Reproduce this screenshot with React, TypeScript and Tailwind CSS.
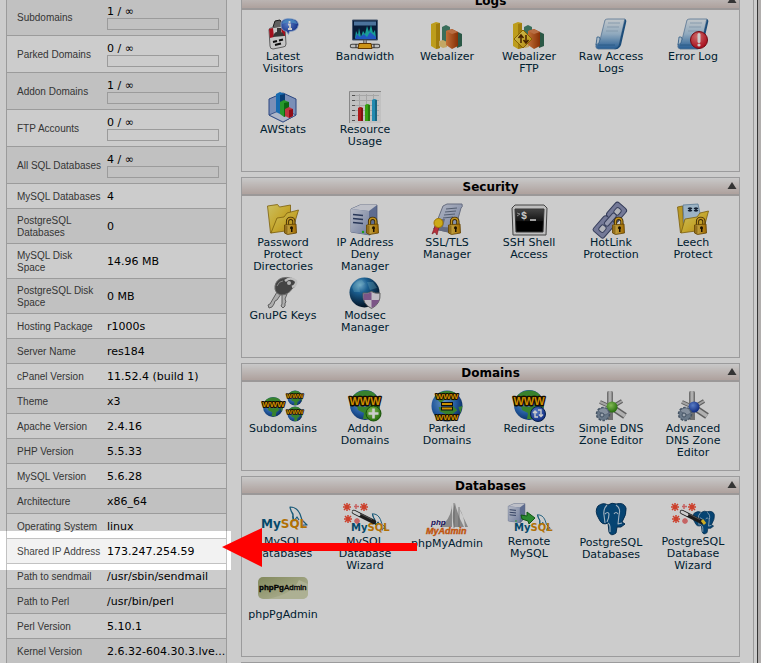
import React from 'react';

type SvgProps = { w?: number; h?: number; children: React.ReactNode };
const Svg = ({ w = 32, h = 32, children }: SvgProps) => (
  <svg width={w} height={h} viewBox={`0 0 ${w} ${h}`} className="block shrink-0 overflow-visible" aria-hidden="true">
    {children}
  </svg>
);

/* Shared gradients, referenced by every icon */
const Defs = () => (
  <svg width="0" height="0" className="absolute" aria-hidden="true">
    <defs>
      <linearGradient id="gold" x1="0" y1="0" x2="1" y2="1">
        <stop offset="0" stopColor="#fff07a" />
        <stop offset="0.5" stopColor="#f7d23c" />
        <stop offset="1" stopColor="#dca010" />
      </linearGradient>
      <linearGradient id="brass" x1="0" y1="0" x2="1" y2="0">
        <stop offset="0" stopColor="#ffe06a" />
        <stop offset="1" stopColor="#c98400" />
      </linearGradient>
      <linearGradient id="page" x1="0" y1="0" x2="0" y2="1">
        <stop offset="0" stopColor="#f2f8fc" />
        <stop offset="0.5" stopColor="#b4d4ee" />
        <stop offset="1" stopColor="#2f74b8" />
      </linearGradient>
      <linearGradient id="steel" x1="0" y1="0" x2="1" y2="1">
        <stop offset="0" stopColor="#e4e9f6" />
        <stop offset="1" stopColor="#8d9dc6" />
      </linearGradient>
      <linearGradient id="rod" x1="0" y1="0" x2="1" y2="0">
        <stop offset="0" stopColor="#777" />
        <stop offset="0.5" stopColor="#eee" />
        <stop offset="1" stopColor="#777" />
      </linearGradient>
      <linearGradient id="screen" x1="0" y1="0" x2="0" y2="1">
        <stop offset="0" stopColor="#555" />
        <stop offset="0.5" stopColor="#1c1c1c" />
        <stop offset="0.55" stopColor="#000" />
        <stop offset="1" stopColor="#000" />
      </linearGradient>
      <linearGradient id="orange" x1="0" y1="0" x2="1" y2="0">
        <stop offset="0" stopColor="#f08a45" />
        <stop offset="1" stopColor="#a83c08" />
      </linearGradient>
      <linearGradient id="olive" x1="0" y1="0" x2="1" y2="1">
        <stop offset="0" stopColor="#a3ab73" />
        <stop offset="1" stopColor="#e2e5c4" />
      </linearGradient>
      <radialGradient id="globe" cx="0.4" cy="0.4" r="0.65">
        <stop offset="0" stopColor="#7db9ef" />
        <stop offset="0.6" stopColor="#2b6fc4" />
        <stop offset="1" stopColor="#0c3678" />
      </radialGradient>
      <radialGradient id="deep" cx="0.35" cy="0.25" r="0.75">
        <stop offset="0" stopColor="#8fd6fa" />
        <stop offset="0.35" stopColor="#2277b5" />
        <stop offset="1" stopColor="#03172d" />
      </radialGradient>
      <radialGradient id="green" cx="0.4" cy="0.35" r="0.7">
        <stop offset="0" stopColor="#a4e86b" />
        <stop offset="1" stopColor="#278208" />
      </radialGradient>
      <radialGradient id="blue" cx="0.4" cy="0.35" r="0.7">
        <stop offset="0" stopColor="#6f9cf5" />
        <stop offset="1" stopColor="#0c2e9c" />
      </radialGradient>
      <radialGradient id="red" cx="0.4" cy="0.3" r="0.8">
        <stop offset="0" stopColor="#ff8484" />
        <stop offset="1" stopColor="#cc0015" />
      </radialGradient>
    </defs>
  </svg>
);

const Lock = () => (
  <g>
    <path d="M20.5 21v-3.500a3.200 3.200 0 0 1 6.400 0v3.500" fill="none" stroke="#4c3404" strokeWidth="3.200" />
    <path d="M20.5 21v-3.500a3.200 3.200 0 0 1 6.400 0v3.500" fill="none" stroke="#efb72a" strokeWidth="1.400" />
    <path d="M17.500 21l11.500-1 .500 9-9 1.500-3-1.500z" fill="url(#brass)" stroke="#7a5200" strokeWidth="0.800" strokeLinejoin="round" />
    <path d="M17.500 21l3 1v8.500l-3-1.500z" fill="#8d5c00" opacity="0.600" />
    <circle cx="24.500" cy="23.700" r="1.500" fill="#221500" />
    <path d="M24 24h1.500v4H24z" fill="#221500" />
  </g>
);

const Www = ({ x, y, size }: { x: number; y: number; size: number }) => (
  <text x={x} y={y} textAnchor="middle" fontSize={size} fontWeight="700" fontFamily="'Liberation Sans', sans-serif" fill="#ffb400" stroke="#1a1000" strokeWidth={size / 4} paintOrder="stroke" strokeLinejoin="round">
    WWW
  </text>
);

const Globe = ({ x, y, r }: { x: number; y: number; r: number }) => (
  <g transform={`translate(${x} ${y}) scale(${r / 15})`}>
    <circle r="15" fill="url(#globe)" />
    <path d="M-12-9C-7-15 5-17 11-10L7-5 0-8-6-3zM-8 1l9 1 5-2 4 4-5 4-1 6-6 0 1-6-6-3zM11 1l4-1-2 7z" fill="#45a33a" />
  </g>
);

const Tower = () => (
  <g strokeLinejoin="round">
    <path d="M2 5l9-4h17v22l-7 8L2 28z" fill="#7688b5" stroke="#53638d" strokeWidth="0.700" />
    <path d="M2 5l9-4h17l-8 6z" fill="#eef1fa" />
    <path d="M2 5l18 2v24L2 28z" fill="url(#steel)" />
    <path d="M4 10.500l10 1M4 14.500l10 1M4 18.500l10 1" stroke="#33456f" strokeWidth="1.400" />
    <circle cx="14" cy="28" r="1.200" fill="#21c51b" />
  </g>
);

const Folder = () => (
  <g stroke="#9a760f" strokeWidth="0.800" strokeLinejoin="round">
    <path d="M0.500 2l10-1.500 2 2.500 11-2v22l-20 6z" fill="url(#gold)" />
    <path d="M4 29l6-15 7-1 3-4 11.500-3-6 20z" fill="url(#gold)" />
  </g>
);

const Sheet = () => (
  <g>
    <path d="M10 2q1-1 3-1h17q-1 2-1 4l-5 22q-1 4-4 4H3q-3-1-2-4l1-5h3z" fill="url(#page)" stroke="#6d92b8" strokeWidth="0.800" />
    <path d="M30 1q2 1 1 4l-5 22q-2 5-7 4 4-1 5-5z" fill="#246199" />
    <path d="M2 19q3-1 3 2 0 5-4 6zM3 27h17" fill="#d6eafa" stroke="#2d679d" strokeWidth="0.700" />
    <path d="M13 5h12M12 9h12M11 13h12" stroke="#a3bed6" strokeWidth="0.900" />
  </g>
);

const Bars = () => (
  <g>
    <path d="M11 9l4-2 4 2v18h-8z" fill="#498a72" />
    <path d="M0 6l5-2 4 1v25l-4 1-5-3z" fill="#edc524" />
    <path d="M5 6l4-1v25l-4 1z" fill="#c99c10" />
    <path d="M8 23l4-1 4 2v5l-4 1-4-2z" fill="#f4d17f" />
    <path d="M24 15l3-1 4 2v12l-5 2z" fill="#366e58" />
    <path d="M15 13l6-2 6 3v14l-6 3-6-4z" fill="url(#orange)" />
    <path d="M15 13l6-2 6 3-6 2z" fill="#e78a54" />
  </g>
);

const LatestVisitors = () => (
  <Svg>
    <path d="M6 9l2-6 5-1 2 3 0 4-4 3z" fill="#777" stroke="#222" />
    <path d="M2 12q0-2 2-2l12-2q2 0 2 2l1 16q0 3-3 3L6 31q-3 0-3-3z" fill="#f7f7f7" stroke="#777" />
    <path d="M2 11l4-1 1 9-4 1zM14 9l4-1 0 10-3 0z" fill="#cd1525" />
    <path d="M6 19q1-5 4-5l0-4 4 0 0 4q3 1 3 4z" fill="#444" />
    <path d="M6 24l4-1M12 22.500l4-1M8 27l6-1.500" stroke="#111" strokeWidth="2" />
    <path d="M14 8q-1-7 7-7.500 10 0 10.500 6-1 7-9 7l-1 3-2-3q-5-1-5.500-5.500z" fill="url(#blue)" stroke="#aecdf5" strokeWidth="0.800" />
    <path d="M15 6q1-5 8-5 7 1 7 5-8-3-15 0z" fill="#5eaef1" opacity="0.800" />
    <path d="M22.500 3v2M21 6.500h2v4.500M21 11h4" stroke="#fff" strokeWidth="1.800" fill="none" />
  </Svg>
);

const Bandwidth = () => (
  <Svg>
    <path d="M3.500 2h25v20h-25z" fill="#0b2447" stroke="#5a6f8b" />
    <path d="M5 3.500h22v4H5z" fill="#6090c4" />
    <path d="M6 20l1-7 2 4 1-7 2 9 2-6 2 3 2-8 2 6 2-7 2 8 2-3 1 8z" fill="#20c6bd" />
    <path d="M6 21l2-5 3 3 4-3 3 3 3-5 6 5v2z" fill="#2a6df0" />
    <path d="M14.500 22h3v4h-3z" fill="#bbb" stroke="#666" strokeWidth="0.700" />
    <path d="M3 28h26" stroke="#555" strokeWidth="4.500" strokeLinecap="round" />
    <path d="M3 28h26" stroke="#eee" strokeWidth="2.500" strokeLinecap="round" />
    <path d="M10 25.500h12l1 5H9z" fill="#ffb91d" stroke="#784400" />
    <path d="M7 26v4M25 26v4" stroke="#333" />
  </Svg>
);

const Webalizer = () => (
  <Svg><Bars /></Svg>
);

const WebalizerFtp = () => (
  <Svg>
    <Bars />
    <path d="M10 12l9 9-9 9-9-9z" fill="url(#gold)" stroke="#a97a00" strokeLinejoin="round" />
    <path d="M8 25v-7M5.500 20l2.500-3 2.500 3M13 17v7M10.500 22l2.500 3 2.500-3" fill="none" stroke="#5a2a00" strokeWidth="1.500" />
  </Svg>
);

const RawLogs = () => (
  <Svg><Sheet /></Svg>
);

const ErrorLog = () => (
  <Svg>
    <Sheet />
    <circle cx="22" cy="22" r="8.500" fill="url(#red)" stroke="#8d0c16" />
    <path d="M22 16.500v7" stroke="#fff" strokeWidth="3" strokeLinecap="round" />
    <circle cx="22" cy="27" r="1.600" fill="#fff" />
  </Svg>
);

const AwStats = () => (
  <Svg>
    <path d="M2 8l14-6 13 6v16l-13 7-14-7z" fill="#9ab3e5" stroke="#3658a0" />
    <path d="M2 24l14-6 13 6-13 7z" fill="#dbe5fb" stroke="#3658a0" strokeWidth="0.800" />
    <path d="M16 2v16" stroke="#7390cb" />
    <path d="M9 3l4-2 5 2v18l-5 2-4-2z" fill="#1f86dc" />
    <path d="M13 4l5-1v18l-5 2z" fill="#0b4c91" />
    <path d="M13 11l4-2 5 2v12l-5 3-4-3z" fill="#33be37" />
    <path d="M17 12l5-1v12l-5 3z" fill="#108117" />
    <path d="M18 18l4-2 4 2v7l-4 2-4-2z" fill="#ee4350" />
    <path d="M22 19l4-1v7l-4 2z" fill="#b4111f" />
  </Svg>
);

const ResourceUsage = () => (
  <Svg>
    <path d="M0 0h32v32H0z" fill="#f2f2f2" />
    <path d="M0.500 32V0.500H32" fill="none" stroke="#aaa" />
    <path d="M5 4.500h25M5 9.500h25M5 14.500h25M5 19.500h25M5 24.500h25M10.500 3v27M17.500 3v27M24.500 3v27" stroke="#d0d0d0" />
    <path d="M3 4.500h3M3 9.500h3M3 14.500h3M3 19.500h3M3 24.500h3M3 29.500h3" stroke="#666" />
    <path d="M9 17q2.500-2 5 0v13H9z" fill="#d82020" />
    <path d="M16 14q2.500-2 5 0v16h-5z" fill="#45cb17" />
    <path d="M23 9q2.500-2 5 0v21h-5z" fill="#28addd" />
    <path d="M13 17v13M20 14v16M27 9v21" stroke="#0004" strokeWidth="2" />
  </Svg>
);

const PasswordProtect = () => (
  <Svg><Folder /><Lock /></Svg>
);
const IpDeny = () => (
  <Svg><Tower /><Lock /></Svg>
);
const SslTls = () => (
  <Svg>
    <path d="M12 2l4-2h15q1 3-1 4l-7 25-20-4z" fill="url(#steel)" stroke="#8088a0" />
    <path d="M2 25l8-10 4 0-2 8 13 1-2 6z" fill="#7f86a0" />
    <path d="M15 5l11-1M14 8l11-1M13 11l11-1M12 14l10-1" stroke="#68758d" />
    <path d="M4 22l-3 8 3-2 2 3 2-8" fill="#e33e4a" stroke="#9a1822" strokeWidth="0.600" />
    <circle cx="7.500" cy="19" r="4.500" fill="#ffd51d" stroke="#cc9400" />
    <Lock />
  </Svg>
);
const SshShell = () => (
  <Svg w={37}>
    <path d="M4 1h29l3 3-1 27H2L1 4z" fill="#eee" stroke="#555" strokeLinejoin="round" />
    <path d="M4 5h29l-1 23H5z" fill="url(#screen)" stroke="#444" />
    <path d="M6 9l3 1-3 2" fill="none" stroke="#aaa" />
    <text x="10" y="15" fontSize="10" fontWeight="700" fontFamily="'Liberation Mono', monospace" fill="#fff">$</text>
    <path d="M19 16h6" stroke="#fff" strokeWidth="1.500" />
  </Svg>
);
const HotLink = () => (
  <Svg>
    <g transform="rotate(-49 15 16)">
      <path d="M-4 11q0-2 2-2h15q3 0 3 3v8q0 3-3 3H-2q-2 0-2-2zM16 12q0-3 3-3h12q3 0 3 3v8q0 3-3 3H19q-3 0-3-3z" fill="#9198bd" stroke="#454e72" />
      <rect x="0" y="13" width="7" height="6" rx="2" fill="#dfe1ea" stroke="#454e72" />
      <rect x="23" y="13" width="7" height="6" rx="2" fill="#dfe1ea" stroke="#454e72" />
      <rect x="8" y="13.500" width="15" height="5" rx="2" fill="#b9bfda" stroke="#454e72" />
    </g>
    <Lock />
  </Svg>
);
const LeechProtect = () => (
  <Svg>
    <path d="M0.500 3l5-1 1 24-3 3z" fill="#e8c030" stroke="#9a760f" strokeWidth="0.800" />
    <path d="M6 1l15-1 3 14-17 5z" fill="#c4e0f5" stroke="#6e98b9" strokeWidth="0.800" />
    <path d="M13 3v5M11 4l4 3M15 4l-4 3M19 3v5M17 4l4 3M21 4l-4 3" stroke="#15253c" strokeWidth="1.200" />
    <path d="M4 29l4-14 12-2 3-4 8.500-2-5 19z" fill="url(#gold)" stroke="#9a760f" strokeWidth="0.800" strokeLinejoin="round" />
    <Lock />
  </Svg>
);
const GnuPg = () => (
  <Svg>
    <path d="M10 15L3 27l-2 1 1 3 3-1 2-3 1-3 2-1 4-6zM15 16v11l-1 2 2 2 2-2 0-3 1-1-1-3 2-5z" fill="#d9d9d9" stroke="#777" />
    <path d="M8 9q1-6 7-8 10-2 14 3 1 5-4 8-4 6-11 6-7-2-6-9z" fill="#555" stroke="#888" />
    <path d="M18 4q6-5 11 0 1 4-4 6" fill="none" stroke="#eee" strokeWidth="2.500" />
    <circle cx="22" cy="6" r="2" fill="#ddd" />
    <path d="M10 9q2-5 6-5" fill="none" stroke="#aaa" />
  </Svg>
);
const Modsec = () => (
  <Svg>
    <circle cx="15.500" cy="15.500" r="15" fill="url(#deep)" />
    <path d="M3 10q4-7 10-7l3 4-6 3 1 5-6 0zM18 5l6 0 4 6-7 2z" fill="#8fd9ef" opacity="0.300" />
    <path d="M14 16q5 1 8.500-1.500Q26 17 31 16q1 11-8.500 15.500Q13 27 14 16z" fill="#f2edf5" stroke="#777" />
    <path d="M14.500 16.500q4 1 8-1.500v8h-8zM22.500 23h8q-2 5-8 8z" fill="#9b6ba9" />
  </Svg>
);

const Subdomains = () => (
  <Svg w={42}>
    <Globe x={11} y={17} r={10} />
    <Globe x={33} y={8} r={7.500} />
    <Globe x={33} y={24} r={7.500} />
    <Www x={11.500} y={17} size={8} />
    <Www x={33} y={8} size={6} />
    <Www x={33} y={24} size={6} />
  </Svg>
);
const AddonDomains = () => (
  <Svg>
    <Globe x={16} y={15} r={15} />
    <Www x={16} y={15} size={11} />
    <circle cx="24.500" cy="23.500" r="7.500" fill="url(#green)" stroke="#1a6508" />
    <path d="M24.500 18.500v10M19.500 23.500h10" stroke="#fff" strokeWidth="2.600" />
  </Svg>
);
const ParkedDomains = () => (
  <Svg>
    <Globe x={16} y={16} r={15.500} />
    <Www x={16} y={9} size={8} />
    <Www x={16} y={30} size={8} />
    <path d="M10 14h12M10 18.500h12" stroke="#111" strokeWidth="4" />
    <path d="M11 14h10M11 18.500h10" stroke="#ffb400" strokeWidth="1.800" />
  </Svg>
);
const Redirects = () => (
  <Svg>
    <Globe x={16} y={15} r={15} />
    <Www x={16} y={15} size={11} />
    <circle cx="25" cy="24" r="7.500" fill="url(#blue)" stroke="#08295c" />
    <path d="M22 21v6h3M20 23l2-2 2 2M25 20h3v6M26 24.500l2 2 2-2" fill="none" stroke="#fff" strokeWidth="1.400" />
  </Svg>
);

const Dns = ({ fill }: { fill: string }) => (
  <Svg>
    <path d="M16 17L5 12M17 17l10-6" stroke="#777" strokeWidth="4" />
    <path d="M16 17L5 12M17 17l10-6" stroke="#ccc" strokeWidth="2" />
    <rect x="12" y="1" width="6" height="16" rx="1.500" fill="url(#rod)" />
    <path d="M18 18l12 8" stroke="#777" strokeWidth="6.500" />
    <path d="M18 18l12 8" stroke="#ddd" strokeWidth="3.500" />
    <path d="M13 20h5v10h-5z" fill="#8c8c8c" />
    <circle cx="17" cy="17" r="5.500" fill={fill} />
    <circle cx="8" cy="24" r="6.500" fill="#8496ab" stroke="#56687c" strokeWidth="1.500" strokeDasharray="2.500 1.500" />
    <path d="M3 21q4-5 9-2l2 4-4 2z" fill="#a7b5c6" stroke="#65768b" strokeWidth="0.700" />
    <circle cx="7" cy="25" r="2" fill="#c5d0dc" stroke="#52657c" />
  </Svg>
);
const SimpleDns = () => <Dns fill="url(#green)" />;
const AdvancedDns = () => <Dns fill="url(#blue)" />;

const Dolphin = () => (
  <path d="M2 15Q0 12 1 9-2 3-2 1q7 0 10 7l2 6 5 5-4 0-1 3M-2 1q1 5 3 7 0 3 1 7l3-4 2 3" fill="none" stroke="#1c6f96" strokeWidth="1.200" strokeLinejoin="round" />
);
const MySqlText = ({ x, y, size }: { x: number; y: number; size: number }) => (
  <text x={x} y={y} fontSize={size} fontWeight="700" fontFamily="'DejaVu Sans', sans-serif">
    <tspan fill="#075c86">My</tspan><tspan fill="#dd8d05">SQL</tspan>
  </text>
);
const Sparks = () => (
  <g stroke="#ff5138" strokeWidth="1.500">
    <path d="M4 0v8M0 4h8M1 1l6 6M7 1L1 7M21 0v8M17 4h8M18 1l6 6M24 1l-6 6M5 12v8M1 16h8M2 13l6 6M8 13l-6 6" />
    <path d="M13 1v5M11 3.500h5M14 15v6M11 18h6M12 16l4 4M16 16l-4 4" stroke="#f77c7c" />
  </g>
);
const Wand = () => (
  <g>
    <path d="M11 9l20 10" stroke="#222" strokeWidth="4.500" strokeLinecap="round" />
    <path d="M11 9l5 2.500" stroke="#fff" strokeWidth="3" strokeLinecap="round" />
    <path d="M18 11l11 5.500" stroke="#777" strokeWidth="0.800" />
  </g>
);
const Elephant = () => (
  <g strokeLinejoin="round">
    <path d="M3 3Q8-1 13 2q4-3 8-1 8-2 10 4 1 6-4 14l3 2-4 3-4 0-1 6q-5 4-7-1l-1-9q-6 3-9-4Q-1 8 3 3z" fill="#08558f" stroke="#073a65" />
    <path d="M12 2q-4 4-3 10l1 8M21 2q5 3 3 10l-1 9 4-1M10 11q3-3 4 0 0 4-2 8M19 11q2-3 4 0M13 20q2 1 2 4l0 5" fill="none" stroke="#c9dff0" strokeWidth="1.100" />
  </g>
);

const MySql = () => (
  <Svg w={45}>
    <g transform="translate(31 3)"><Dolphin /></g>
    <MySqlText x={0} y={25} size={12} />
  </Svg>
);
const MySqlWizard = () => (
  <Svg w={44}>
    <g transform="translate(31 10) scale(.8)"><Dolphin /></g>
    <MySqlText x={8} y={28} size={10} />
    <Sparks /><Wand />
  </Svg>
);
const PhpMyAdmin = () => (
  <Svg w={42} h={34}>
    <path d="M26 2q-1 14-12 22h12zM29 0q-4 13-1 24h10Q32 14 29 0zM33 5l9 19h-3Q38 12 33 5z" fill="#aaa" />
    <path d="M28 0v25M33 4v20" stroke="#777" strokeWidth="0.700" />
    <text x="5" y="22" fontSize="8" fontWeight="700" fontStyle="italic" fontFamily="'Liberation Sans', sans-serif" fill="#1b1273">php</text>
    <text x="0" y="31" fontSize="9" fontWeight="700" fontStyle="italic" fontFamily="'Liberation Sans', sans-serif" fill="#f16a10" stroke="#f16a10" strokeWidth="0.400">MyAdmin</text>
  </Svg>
);
const RemoteMySql = () => (
  <Svg w={44}>
    <g transform="scale(.64)"><Tower /></g>
    <g transform="translate(32 11) scale(.75)"><Dolphin /></g>
    <path d="M14 12l6 1 0-4 8 6-6 6-1-3-6-2z" fill="#36ac3c" stroke="#146c19" />
    <MySqlText x={7} y={28} size={10} />
  </Svg>
);
const Postgres = () => (
  <Svg h={33}><Elephant /></Svg>
);
const PostgresWizard = () => (
  <Svg w={44}>
    <g transform="translate(21 8) scale(.72)"><Elephant /></g>
    <Sparks /><Wand />
    <path d="M31 17l3 4" stroke="#ffd931" strokeWidth="3" />
  </Svg>
);
const PhpPgAdmin = () => (
  <Svg w={50}>
    <rect x="0" y="1" width="50" height="22" rx="5" fill="url(#olive)" />
    <path d="M10 23Q35 18 41 4l9 4v10q-1 4-5 5z" fill="#d9ddb8" />
    <text x="1" y="14" fontSize="8" fontFamily="'Liberation Sans', sans-serif" fill="#000" stroke="#000" strokeWidth="0.300">
      <tspan fontWeight="700">phpPg</tspan><tspan>Admin</tspan>
    </text>
  </Svg>
);

type Tool = { label: string[]; icon: React.ComponentType };
const panels: { title: string; tools: Tool[] }[] = [
  {
    title: 'Logs',
    tools: [
      { label: ['Latest', 'Visitors'], icon: LatestVisitors },
      { label: ['Bandwidth'], icon: Bandwidth },
      { label: ['Webalizer'], icon: Webalizer },
      { label: ['Webalizer', 'FTP'], icon: WebalizerFtp },
      { label: ['Raw Access', 'Logs'], icon: RawLogs },
      { label: ['Error Log'], icon: ErrorLog },
      { label: ['AWStats'], icon: AwStats },
      { label: ['Resource', 'Usage'], icon: ResourceUsage },
    ],
  },
  {
    title: 'Security',
    tools: [
      { label: ['Password', 'Protect', 'Directories'], icon: PasswordProtect },
      { label: ['IP Address', 'Deny', 'Manager'], icon: IpDeny },
      { label: ['SSL/TLS', 'Manager'], icon: SslTls },
      { label: ['SSH Shell', 'Access'], icon: SshShell },
      { label: ['HotLink', 'Protection'], icon: HotLink },
      { label: ['Leech', 'Protect'], icon: LeechProtect },
      { label: ['GnuPG Keys'], icon: GnuPg },
      { label: ['Modsec', 'Manager'], icon: Modsec },
    ],
  },
  {
    title: 'Domains',
    tools: [
      { label: ['Subdomains'], icon: Subdomains },
      { label: ['Addon', 'Domains'], icon: AddonDomains },
      { label: ['Parked', 'Domains'], icon: ParkedDomains },
      { label: ['Redirects'], icon: Redirects },
      { label: ['Simple DNS', 'Zone Editor'], icon: SimpleDns },
      { label: ['Advanced', 'DNS Zone', 'Editor'], icon: AdvancedDns },
    ],
  },
  {
    title: 'Databases',
    tools: [
      { label: ['MySQL', 'Databases'], icon: MySql },
      { label: ['MySQL', 'Database', 'Wizard'], icon: MySqlWizard },
      { label: ['phpMyAdmin'], icon: PhpMyAdmin },
      { label: ['Remote', 'MySQL'], icon: RemoteMySql },
      { label: ['PostgreSQL', 'Databases'], icon: Postgres },
      { label: ['PostgreSQL', 'Database', 'Wizard'], icon: PostgresWizard },
      { label: ['phpPgAdmin'], icon: PhpPgAdmin },
    ],
  },
];

type Stat = { name: string; value: string; meter?: boolean; tall?: boolean };
const stats: Stat[] = [
  { name: 'Subdomains', value: '1 / ∞', meter: true },
  { name: 'Parked Domains', value: '0 / ∞', meter: true },
  { name: 'Addon Domains', value: '1 / ∞', meter: true },
  { name: 'FTP Accounts', value: '0 / ∞', meter: true },
  { name: 'All SQL Databases', value: '4 / ∞', meter: true },
  { name: 'MySQL Databases', value: '4' },
  { name: 'PostgreSQL Databases', value: '0', tall: true },
  { name: 'MySQL Disk Space', value: '14.96 MB', tall: true },
  { name: 'PostgreSQL Disk Space', value: '0 MB', tall: true },
  { name: 'Hosting Package', value: 'r1000s' },
  { name: 'Server Name', value: 'res184' },
  { name: 'cPanel Version', value: '11.52.4 (build 1)' },
  { name: 'Theme', value: 'x3' },
  { name: 'Apache Version', value: '2.4.16' },
  { name: 'PHP Version', value: '5.5.33' },
  { name: 'MySQL Version', value: '5.6.28' },
  { name: 'Architecture', value: 'x86_64' },
  { name: 'Operating System', value: 'linux' },
  { name: 'Shared IP Address', value: '173.247.254.59' },
  { name: 'Path to sendmail', value: '/usr/sbin/sendmail' },
  { name: 'Path to Perl', value: '/usr/bin/perl' },
  { name: 'Perl Version', value: '5.10.1' },
  { name: 'Kernel Version', value: '2.6.32-604.30.3.lve...' },
];

const rowHeight = (s: Stat) => (s.meter ? 'h-[37px]' : s.tall ? 'h-[35px]' : 'h-[25px]');

const StatsTable = () => (
  <table className="-mt-px w-[221px] shrink-0 table-fixed border-separate border-spacing-0 self-start border-x border-[#c2c2c2]">
    <tbody>
      {stats.map((s) => (
        <tr key={s.name} className={`${rowHeight(s)} odd:bg-[#f2f2f2]`}>
          <th scope="row" className="w-[100px] border-b border-[#c2c2c2] pt-[2px] pr-2 pb-0 pl-[10px] text-left align-middle font-['Liberation_Sans',sans-serif] text-[10px] leading-3 font-normal text-[#444]">
            <span className={s.tall ? 'block' : 'block whitespace-nowrap'}>{s.name}</span>
          </th>
          <td className={`${s.meter ? 'pt-0' : 'pt-[2px]'} border-b border-[#c2c2c2] px-0 pb-0 align-middle text-[11px] leading-3 whitespace-nowrap text-black`}>
            <span className={s.meter ? 'block pt-px' : 'block'}>{s.value}</span>
            {s.meter && (
              <progress
                value={0}
                max={1}
                aria-label={s.name}
                className="block h-3 w-28 appearance-none border border-[#c2c2c2] bg-transparent [&::-webkit-progress-bar]:bg-transparent"
              />
            )}
          </td>
        </tr>
      ))}
    </tbody>
  </table>
);

const PanelHeader = ({ title }: { title: string }) => (
  <header className="flex h-[18px] items-center border-b-2 border-[#c2bfbf] bg-linear-to-b from-[#fbfbfb] to-[#dacac5] pr-[2px] pl-[12px]">
    <h2 className="flex-1 pt-[2px] text-center text-[12px] leading-4 font-bold text-black">{title}</h2>
    <button type="button" aria-label={`Collapse ${title}`} className="block">
      <svg width="10" height="8" viewBox="0 0 10 8" className="block">
        <path d="M5 0l4.500 7h-9z" fill="#424242" />
      </svg>
    </button>
  </header>
);

const Panel = ({ title, tools }: { title: string; tools: Tool[] }) => (
  <section className="border border-[#c2c2c4] bg-white">
    <PanelHeader title={title} />
    <div className="flex flex-wrap pt-2 pb-[7px]">
      {tools.map(({ label, icon: Icon }) => (
        <a key={label.join(' ')} href="#" className="flex h-[73px] w-[82px] flex-col items-center text-center text-[11px] leading-3 text-[#00283c]">
          <Icon />
          <span className="block pt-px whitespace-nowrap">
            {label.map((line) => (
              <span key={line} className="block">{line}</span>
            ))}
          </span>
        </a>
      ))}
    </div>
  </section>
);

export default function App() {
  return (
    <div className="relative flex h-screen overflow-hidden bg-white font-['DejaVu_Sans',Verdana,sans-serif]">
      <Defs />
      <div className="flex flex-1 gap-[14px] border-r border-[#c2c2c2] pr-[13px] pl-[6px]">
        <StatsTable />
        <main className="-mt-[9px] flex min-w-0 flex-1 flex-col gap-[5px]">
          {panels.map((p) => (
            <Panel key={p.title} title={p.title} tools={p.tools} />
          ))}
          <div className="border-t border-[#c2c2c4]" />
        </main>
      </div>
      <div className="w-[7px] shrink-0 border-l-3 border-white bg-[#dedad9]">
        <div className="h-full w-px bg-[#444]" />
      </div>

      {/* Dimmed page with a spotlight on the shared IP row */}
      <div className="pointer-events-none absolute top-[531px] left-0 h-[39px] w-[231px] shadow-[0_0_0_2000px_rgba(0,0,0,0.2)]" />
      <svg width="196" height="40" viewBox="0 0 196 40" className="pointer-events-none absolute top-[527px] left-[222px]" aria-hidden="true">
        <path d="M0 20L40 1v15h155v8H40v16z" fill="#f00" />
      </svg>
    </div>
  );
}
